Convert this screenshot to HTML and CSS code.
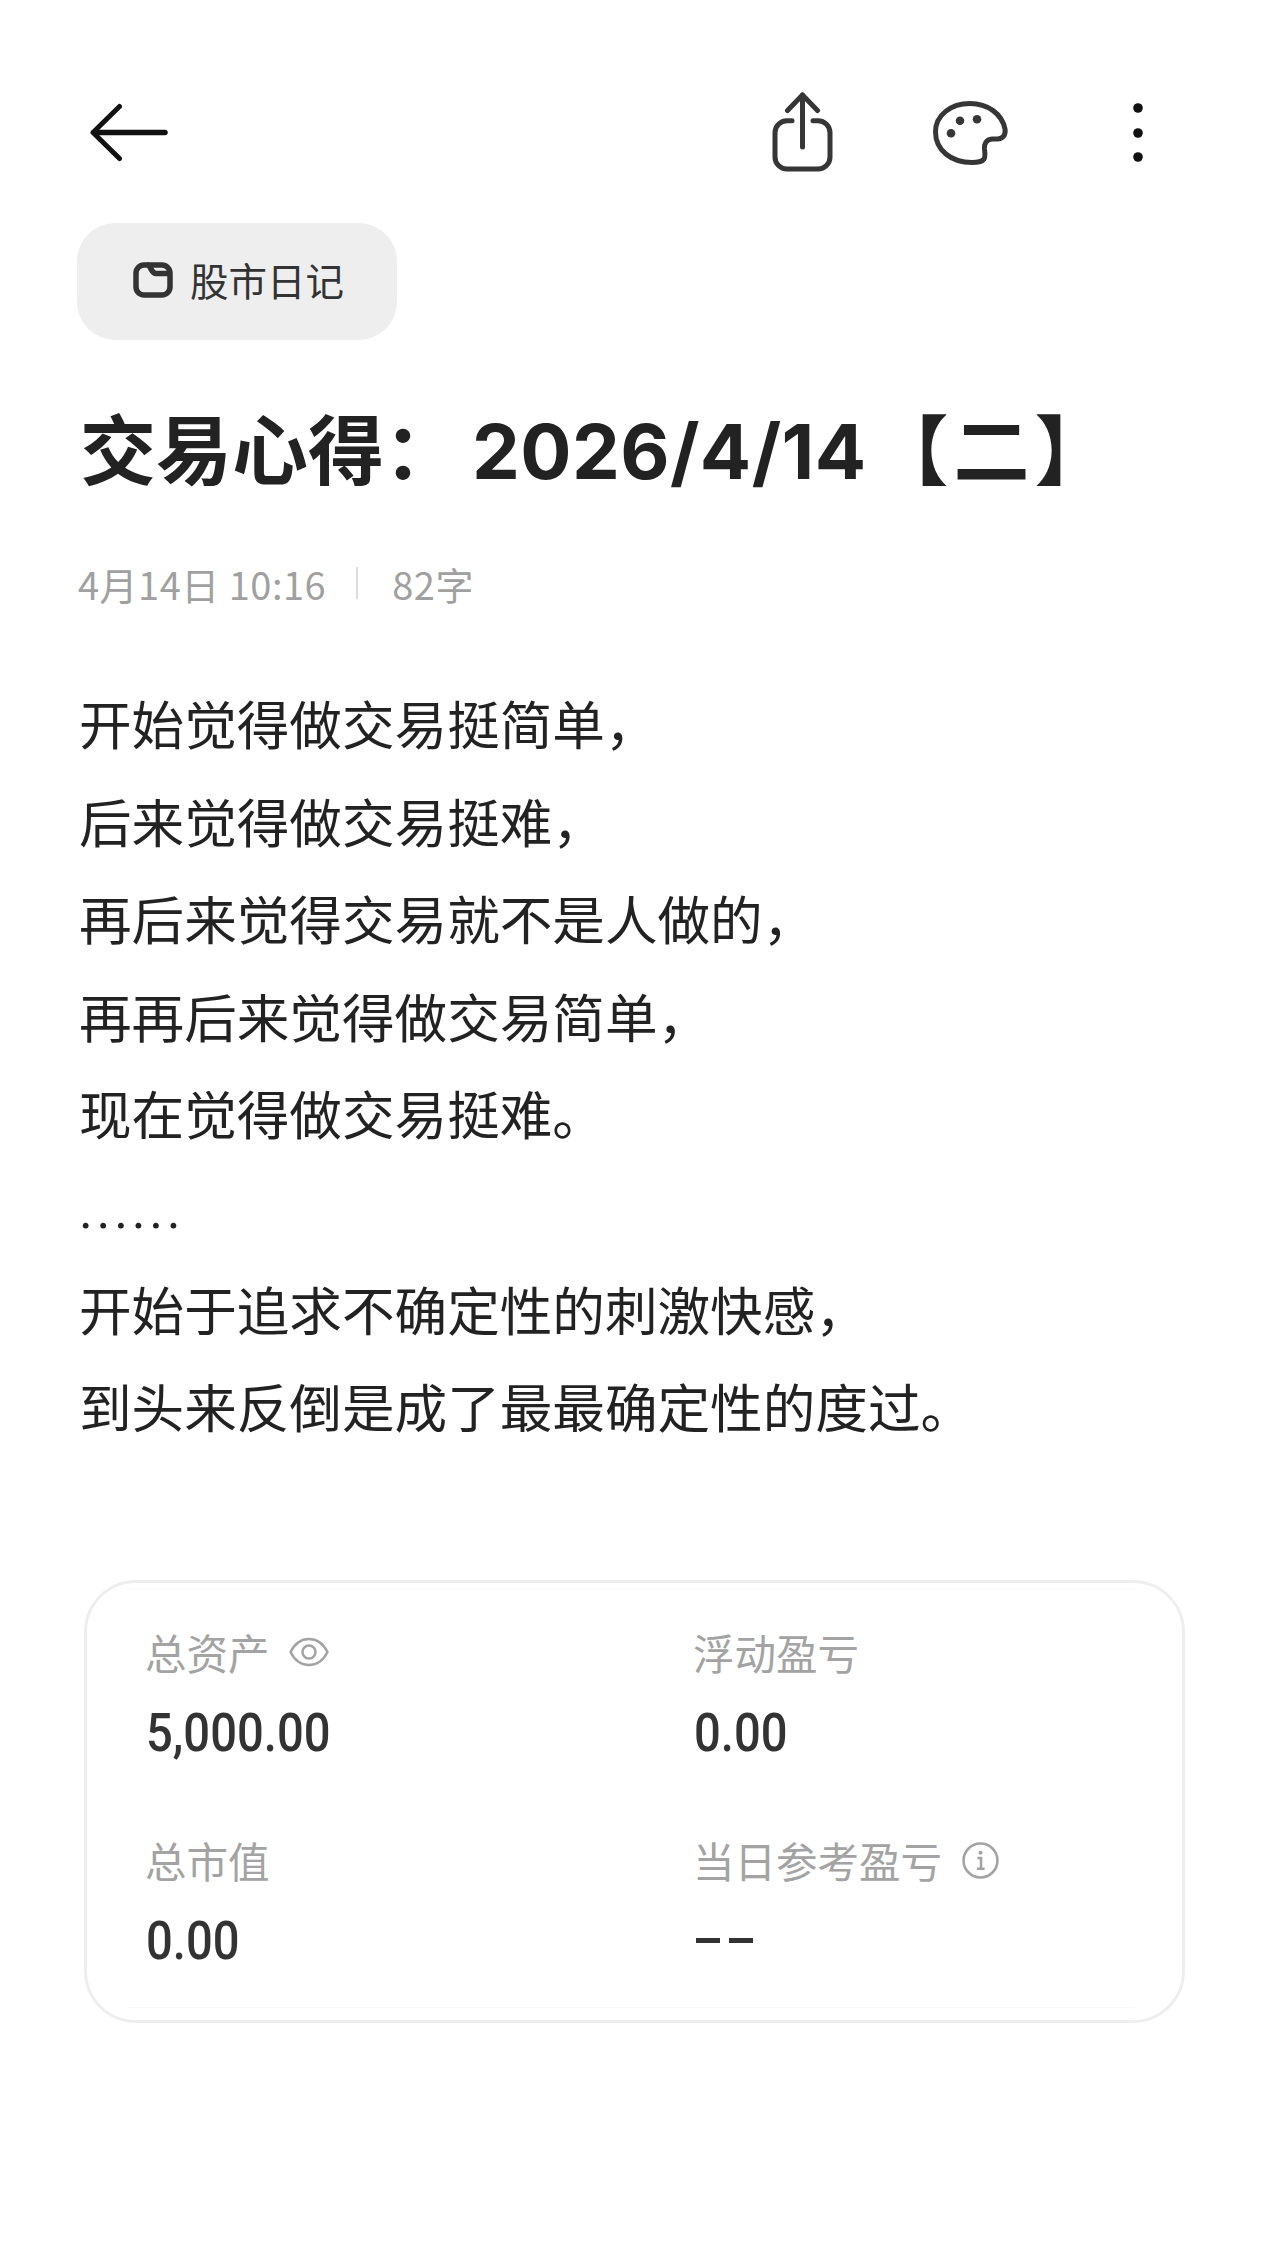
FILE: index.html
```html
<!DOCTYPE html>
<html lang="zh-CN">
<head>
    <meta charset="UTF-8">
    <meta name="viewport" content="width=device-width, initial-scale=1.0">
    <title>交易心得</title>
    <link rel="stylesheet" href="styles.css">
</head>
<body>

    <header class="topbar">
        <svg class="back-icon" viewBox="0 0 80 80" fill="none" stroke="#111" stroke-linecap="round" stroke-linejoin="round">
            <path d="M4 40.5H75" stroke-width="5.5"/>
            <path d="M29.5 14.5L3 40.5L29.5 66.5" stroke-width="5"/>
        </svg>
        <div class="actions">
            <svg class="action-icon" viewBox="0 0 80 80" fill="none" stroke="#363636" stroke-width="5" stroke-linecap="round" stroke-linejoin="round">
                <path d="M40.5 3V55"/>
                <path d="M25.5 18.5L40.5 3L55.5 18.5"/>
                <path d="M30 28.7H25a12 12 0 0 0-12 12V65a12 12 0 0 0 12 12H56a12 12 0 0 0 12-12V40.7a12 12 0 0 0-12-12H51"/>
            </svg>
            <svg class="action-icon" viewBox="0 0 80 80" fill="none" stroke="#363636" stroke-width="5">
                <path d="M40 11.5C58 11.5 72 22 75 37C76 43 73 46.5 68 47H62C56 47.5 54 52 54.5 57C55 61 55.5 65 54 67C52 70 47 70.5 42 70.5C21 70.5 5.5 58 5.5 40C5.5 23 21 11.5 40 11.5Z"/>
                <circle cx="30" cy="28.7" r="4.3" fill="#363636" stroke="none"/>
                <circle cx="47" cy="27.3" r="4.3" fill="#363636" stroke="none"/>
                <circle cx="21" cy="41.3" r="4.3" fill="#363636" stroke="none"/>
            </svg>
            <svg class="action-icon" viewBox="0 0 80 80" fill="#111">
                <circle cx="40" cy="16" r="4.8"/>
                <circle cx="40" cy="41" r="4.8"/>
                <circle cx="40" cy="65" r="4.8"/>
            </svg>
        </div>
    </header>

    <div class="tag">
        <svg class="tag-icon" viewBox="0 0 40 36" fill="none" stroke="#333" stroke-width="5.5" stroke-linejoin="round">
            <rect x="3" y="3" width="34" height="30" rx="8"/>
            <path d="M14 3C18 3 18 11.5 23 11.5H37"/>
        </svg>
        <span>股市日记</span>
    </div>

    <h1 class="title">交易心得：<span class="title-num">2026/4/14</span><span class="title-week">【二】</span></h1>

    <div class="meta">
        <span>4月14日 10:16</span>
        <i class="meta-divider"></i>
        <span>82字</span>
    </div>

    <div class="content">
        <p>开始觉得做交易挺简单，</p>
        <p>后来觉得做交易挺难，</p>
        <p>再后来觉得交易就不是人做的，</p>
        <p>再再后来觉得做交易简单，</p>
        <p>现在觉得做交易挺难。</p>
        <p class="dots">......</p>
        <p>开始于追求不确定性的刺激快感，</p>
        <p>到头来反倒是成了最最确定性的度过。</p>
    </div>

    <div class="card">
        <div class="card-inner">
            <div class="stat">
                <div class="stat-label">总资产
                    <svg class="eye-icon" viewBox="0 0 40 30" fill="none" stroke="#a3a3a3" stroke-width="2.5">
                        <path d="M1.5 15C6 6 12 2 20 2C28 2 34 6 38.5 15C34 24 28 28 20 28C12 28 6 24 1.5 15Z"/>
                        <circle cx="20" cy="15" r="6.5"/>
                    </svg>
                </div>
                <div class="stat-value">5,000.00</div>
            </div>
            <div class="stat">
                <div class="stat-label">浮动盈亏</div>
                <div class="stat-value">0.00</div>
            </div>
            <div class="stat">
                <div class="stat-label">总市值</div>
                <div class="stat-value">0.00</div>
            </div>
            <div class="stat">
                <div class="stat-label">当日参考盈亏
                    <svg class="info-icon" viewBox="0 0 36 36" fill="none" stroke="#a3a3a3" stroke-width="2.5">
                        <circle cx="18" cy="18" r="16.5"/>
                        <circle cx="18" cy="10.5" r="2" fill="#a3a3a3" stroke="none"/>
                        <path d="M15 15.5H18.5V26M14.5 26H22"/>
                    </svg>
                </div>
                <div class="stat-value stat-empty"><i></i><i></i></div>
            </div>
        </div>
    </div>

</body>
</html>
```

FILE: styles.css
```css
* {
    box-sizing: border-box;
}
body {
    margin: 0;
    background: #fff;
    color: #222;
    font-family: "Noto Sans CJK SC", sans-serif;
}
.topbar {
    display: flex;
    justify-content: space-between;
    align-items: center;
    padding: 92px 90px 0 90px;
}
.back-icon, .action-icon {
    width: 80px;
    height: 80px;
    display: block;
}
.actions {
    display: flex;
    gap: 88px;
}
.tag {
    display: flex;
    align-items: center;
    width: 320px;
    height: 117px;
    margin: 51px 0 0 77px;
    padding: 0 0 6px 56px;
    gap: 17px;
    background: #eee;
    border-radius: 38px;
    color: #333;
    font-size: 38.5px;
}
.tag-icon {
    width: 40px;
    height: 36px;
    margin-top: 2px;
}
.title {
    height: 100px;
    margin: 56px 0 0 80px;
    font-size: 76px;
    line-height: 100px;
    font-weight: 700;
    white-space: nowrap;
}
.title-num {
    font-family: Inter, sans-serif;
    margin: 0 6px 0 12px;
    letter-spacing: 0.4px;
}
.title-week {
    letter-spacing: 5px;
}
.meta {
    display: flex;
    align-items: center;
    margin: 62px 0 0 78px;
    height: 50px;
    color: #a0a0a0;
    font-size: 38px;
    letter-spacing: 0.5px;
}
.meta-divider {
    width: 2px;
    height: 32px;
    margin: 0 34px 0 30px;
    background: #ddd;
}
.content {
    margin: 66px 0 0 79px;
    font-size: 52.6px;
}
.content p {
    margin: 0;
    line-height: 97.6px;
    height: 97.6px;
    white-space: nowrap;
}
.dots {
    font-family: Roboto, sans-serif;
    letter-spacing: 3.7px;
}
.card {
    width: 1101px;
    height: 443px;
    margin: 125px 0 0 84px;
    border: 3px solid #eee;
    border-radius: 52px;
    padding: 5px 47px 0 40px;
}
.card-inner {
    display: grid;
    grid-template-columns: 548px 1fr;
    align-content: start;
    row-gap: 72px;
    height: 420px;
    padding: 38px 0 0 18px;
    border-top: 1px solid #f8f8f8;
    border-bottom: 1px solid #f8f8f8;
}
.stat-label {
    display: flex;
    align-items: center;
    height: 50px;
    color: #a3a3a3;
    font-size: 41.5px;
}
.eye-icon {
    width: 40px;
    height: 30px;
    margin-left: 19px;
}
.info-icon {
    width: 37px;
    height: 37px;
    margin: 2px 0 0 20px;
}
.stat-value {
    height: 60px;
    margin: 26px 0 0 1px;
    color: #333;
    font-family: Roboto, sans-serif;
    font-weight: 500;
    font-size: 53px;
    line-height: 60px;
    transform: scaleX(0.89);
    transform-origin: left center;
}
.stat-empty {
    display: flex;
    align-items: center;
    gap: 9px;
    margin-left: 3px;
    transform: none;
}
.stat-empty i {
    width: 24px;
    height: 5px;
    background: #333;
}
```
